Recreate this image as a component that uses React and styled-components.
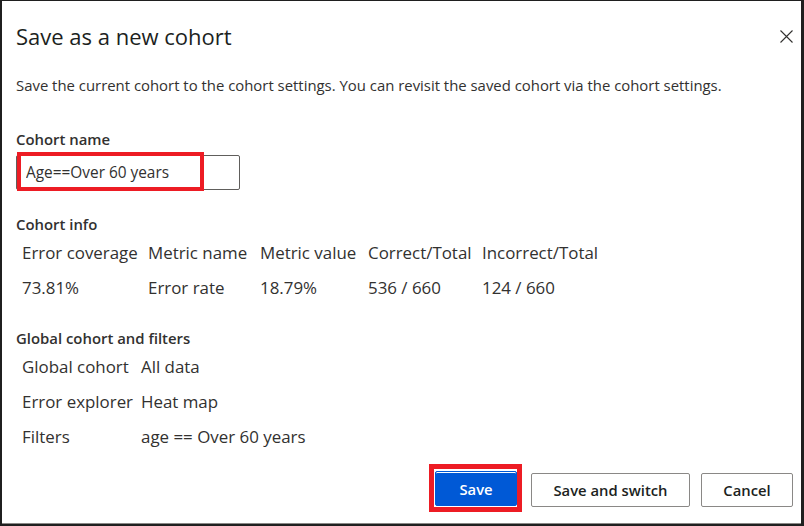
import React from "react";
import styled, { createGlobalStyle } from "styled-components";

const Global = createGlobalStyle`
  html, body { margin: 0; padding: 0; background: #1f1f1f; }
  body { font-family: "Open Sans", "Noto Sans", sans-serif; color: #323130; }
  * { box-sizing: border-box; }
`;

const Frame = styled.div`
  width: 804px;
  height: 526px;
  padding: 1px 3px 2px 2px;
`;

const Dialog = styled.div`
  height: 100%;
  background: #fff;
  border-bottom: 1px solid #8a8886;
  padding: 21px 8px 0 14px;
  display: flex;
  flex-direction: column;
`;

const Header = styled.div`
  display: flex;
  align-items: center;
  justify-content: space-between;
  height: 28px;
`;

const Title = styled.h1`
  margin: 0;
  font-size: 22px;
  line-height: 28px;
  font-weight: 400;
  color: #201f1e;
`;

const Close = styled.button`
  border: 0;
  background: none;
  padding: 0;
  width: 13px;
  height: 13px;
  margin-top: 1px;
  display: flex;
  color: #323130;
`;

const Desc = styled.p`
  margin: 25px 0 0;
  font-size: 14.9px;
  line-height: 20px;
`;

const Label = styled.div`
  margin-top: ${(p) => p.$mt}px;
  font-size: 14.9px;
  line-height: 20px;
  font-weight: 600;
  color: #323130;
`;

const InputWrap = styled.div`
  position: relative;
  margin-top: 6px;
  width: 224px;
  height: 35px;
`;

const Input = styled.input`
  width: 100%;
  height: 100%;
  border: 1px solid #605e5c;
  border-radius: 2px;
  padding: 0 9px;
  font-family: inherit;
  font-size: 15.4px;
  color: #323130;
  outline: none;
`;

const Highlight = styled.div`
  position: absolute;
  left: 1px;
  top: -3px;
  width: ${(p) => p.$w}px;
  height: ${(p) => p.$h}px;
  border: 4px solid #ed1c24;
  pointer-events: none;
`;

const Grid = styled.div`
  display: grid;
  grid-template-columns: ${(p) => p.$cols};
  margin-left: 6px;
  margin-top: ${(p) => p.$mt}px;
`;

const Cell = styled.div`
  height: 35px;
  display: flex;
  align-items: center;
  font-size: 16.9px;
  white-space: nowrap;
  color: #323130;
`;

const Footer = styled.div`
  margin-top: auto;
  margin-bottom: 16px;
  display: flex;
  justify-content: flex-end;
  align-items: flex-start;
  gap: 11px;
`;

const BtnWrap = styled.div`
  position: relative;
  display: flex;
  margin-right: 3px;
  margin-top: -2px;
`;

const Button = styled.button`
  height: ${(p) => (p.$primary ? 35 : 34)}px;
  min-width: ${(p) => p.$w}px;
  padding: 0 16px;
  border-radius: 2px;
  font-family: inherit;
  font-size: 14.8px;
  font-weight: 600;
  border: 1px solid ${(p) => (p.$primary ? "#0059d6" : "#8a8886")};
  background: ${(p) => (p.$primary ? "#0059d6" : "#fff")};
  color: ${(p) => (p.$primary ? "#fff" : "#201f1e")};
  box-shadow: ${(p) => (p.$primary ? "inset 0 1px 0 #fff" : "none")};
`;

const BtnHighlight = styled.div`
  position: absolute;
  left: -6px;
  top: -7px;
  right: -5px;
  bottom: -6px;
  border: 5px solid #ed1c24;
  pointer-events: none;
`;

const cols = "126px 112px 108px 114px auto";
const filterCols = "119px auto";

export default function App() {
  return (
    <>
      <Global />
      <Frame>
        <Dialog>
          <Header>
            <Title>Save as a new cohort</Title>
            <Close aria-label="Close">
              <svg width="13" height="13" viewBox="0 0 13 13">
                <path d="M0.5 0.5 L12.5 12.5 M12.5 0.5 L0.5 12.5" stroke="#323130" strokeWidth="1.1" fill="none" />
              </svg>
            </Close>
          </Header>
          <Desc>
            Save the current cohort to the cohort settings. You can revisit the saved cohort via the cohort settings.
          </Desc>
          <Label $mt={34}>Cohort name</Label>
          <InputWrap>
            <Input defaultValue="Age==Over 60 years" />
            <Highlight $w={187} $h={39} />
          </InputWrap>
          <Label $mt={24}>Cohort info</Label>
          <Grid $cols={cols} $mt={1}>
            <Cell>Error coverage</Cell>
            <Cell>Metric name</Cell>
            <Cell>Metric value</Cell>
            <Cell>Correct/Total</Cell>
            <Cell>Incorrect/Total</Cell>
            <Cell>73.81%</Cell>
            <Cell>Error rate</Cell>
            <Cell>18.79%</Cell>
            <Cell>536 / 660</Cell>
            <Cell>124 / 660</Cell>
          </Grid>
          <Label $mt={23}>Global cohort and filters</Label>
          <Grid $cols={filterCols} $mt={1}>
            <Cell>Global cohort</Cell>
            <Cell>All data</Cell>
            <Cell>Error explorer</Cell>
            <Cell>Heat map</Cell>
            <Cell>Filters</Cell>
            <Cell>age == Over 60 years</Cell>
          </Grid>
          <Footer>
            <BtnWrap>
              <Button $primary $w={82}>Save</Button>
              <BtnHighlight />
            </BtnWrap>
            <Button $w={159}>Save and switch</Button>
            <Button $w={92}>Cancel</Button>
          </Footer>
        </Dialog>
      </Frame>
    </>
  );
}
